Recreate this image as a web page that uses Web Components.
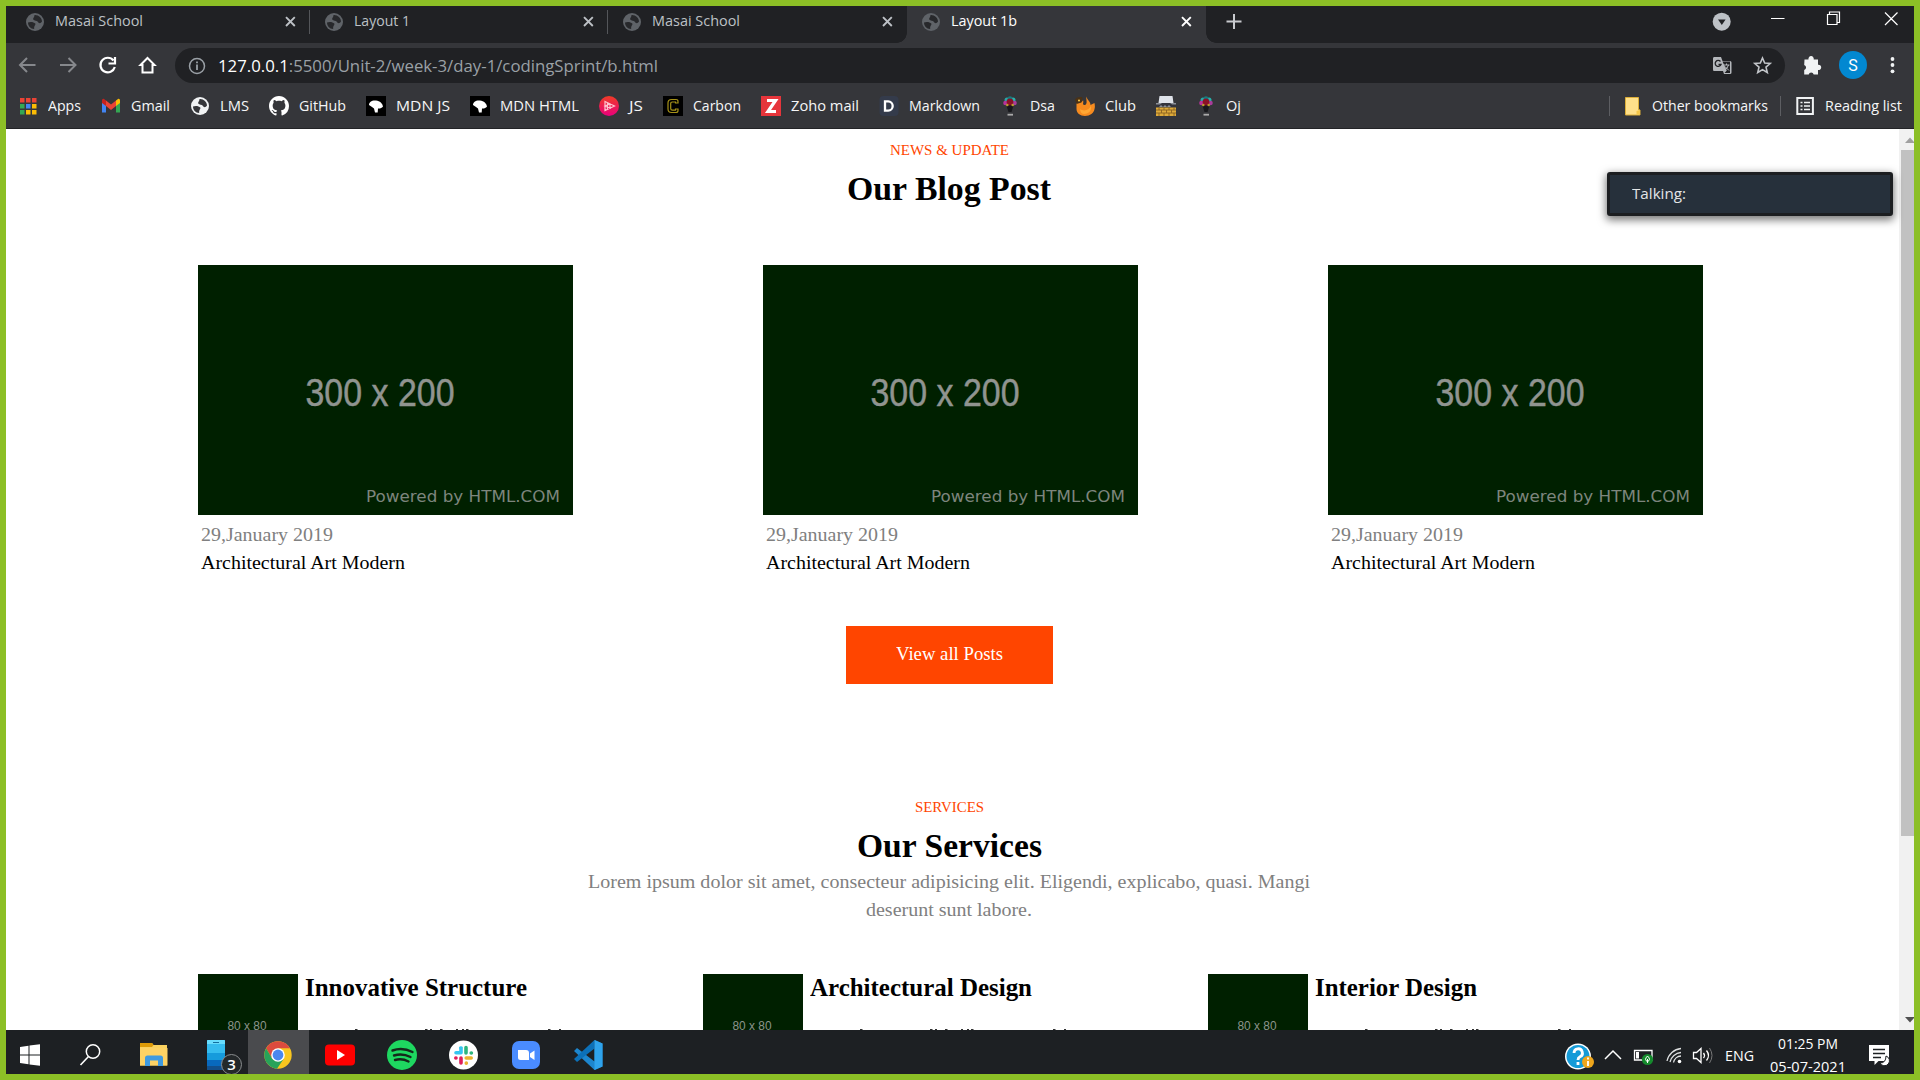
<!DOCTYPE html>
<html lang="en"><head><meta charset="utf-8"><title>Layout 1b</title>
<style>html,body{margin:0;width:1920px;height:1080px;overflow:hidden;background:#8cbf26}</style></head>
<body><desktop-screen></desktop-screen>
<script>
function define(name, css, html, after){
  const t=document.createElement('template');
  t.innerHTML='<style>*,:host{box-sizing:border-box}'+css+'</style>'+html;
  customElements.define(name,class extends HTMLElement{
    connectedCallback(){
      if(this.shadowRoot)return;
      this.attachShadow({mode:'open'}).append(t.content.cloneNode(true));
      if(after)after.call(this,this.shadowRoot);
    }
  });
}
// Text stretched to a fixed width
define('fit-text',':host{display:block;white-space:nowrap;flex:none}span{display:inline-block;transform-origin:0 50%}','<span><slot></slot></span>',function(r){
  const w=+this.getAttribute('w');this.style.width=w+'px';
  const s=r.querySelector('span');
  const n=s.getBoundingClientRect().width;
  if(n)s.style.transform='scaleX('+(w/n)+')';
});
// Icon set; drawn on a square of 20 units
const globe=(a,b)=>`<circle cx="10" cy="10" r="9" fill="${a}"/><path d="M3 10.500C5 9.500 9 9.800 10.300 11.500 11 13 8.800 13.500 9.200 17 5.500 16.800 3 14 3 10.500ZM9.500 3C13.500 2.600 17 6 17 9.500 15.500 12 13.500 11.300 12.800 9.800 12 8.500 9.300 9 8.200 7.600 7.600 6 9.800 5 9.500 3Z" fill="${b}"/>`;
const balloon=`<g transform="translate(3 0)"><path d="M3 8h8L8.500 16h-3z" fill="#17181c"/><circle cx="4" cy="4" r="2.500" fill="#2ba6a6"/><circle cx="10" cy="4" r="2.500" fill="#27b3ad"/><circle cx="2.500" cy="7" r="2.300" fill="#b8339a"/><circle cx="11.500" cy="7" r="2.300" fill="#a93c9b"/><circle cx="7" cy="2.600" r="2.300" fill="#157d80"/><circle cx="7" cy="6" r="3.400" fill="#8a1226"/><circle cx="4.300" cy="9" r="1.300" fill="#bb9b2e"/><circle cx="9.700" cy="9" r="1.300" fill="#bb9b2e"/><rect x="4.500" y="17.800" width="5.500" height="1.800" fill="#aaa"/></g>`;
const mdn=`<path d="M0 0h20v20H0z" fill="#000"/><path d="M3 9C3 6 6 4 10 4.500c4 .5 6.500 3 7 6-1.500 1.800-3 2.200-5 2l-.3 4H9l-1-4-2-1.500z" fill="#fff"/>`;
const ICONS={
 globe:globe('#5f6368','#27282b'),globeLight:globe('#f1f3f4','#35363a'),
 apps:['#ea4335','#ea4335','#ea4335','#34a853','#4285f4','#fbbc05','#34a853','#fbbc05','#fbbc05'].map((c,i)=>`<rect x="${2+i%3*6}" y="${2+(i/3|0)*6}" width="4.500" height="4.500" fill="${c}"/>`).join(''),
 gmail:'<path d="M1 5v11.500h4V9z" fill="#4285f4"/><path d="M19 5v11.500h-4V9z" fill="#34a853"/><path d="M15 4.500 17 3c1-.6 2 .3 2 1.500V7l-4 3z" fill="#fbbc04"/><path d="M5 4.500 10 8.500 15 4.500V10l-5 4-5-4z" fill="#ea4335"/><path d="M5 4.500 3 3C2 2.400 1 3.300 1 4.500V7l4 3z" fill="#c5221f"/>',
 github:'<path fill="#fff" transform="scale(1.25)" d="M8 0C3.580 0 0 3.580 0 8c0 3.540 2.290 6.530 5.470 7.590.4.070.55-.17.55-.38 0-.19-.01-.82-.01-1.490-2.010.37-2.530-.49-2.690-.94-.09-.23-.48-.94-.82-1.130-.28-.15-.68-.52-.01-.53.63-.01 1.080.58 1.230.82.72 1.210 1.870.87 2.330.66.07-.52.28-.87.51-1.070-1.780-.2-3.640-.89-3.640-3.950 0-.87.31-1.590.82-2.150-.08-.2-.36-1.020.08-2.120 0 0 .67-.21 2.200.82.64-.18 1.320-.27 2-.27s1.360.09 2 .27c1.530-1.040 2.200-.82 2.200-.82.44 1.100.16 1.920.08 2.120.51.56.82 1.270.82 2.150 0 3.070-1.870 3.750-3.650 3.950.29.25.54.73.54 1.480 0 1.070-.01 1.930-.01 2.200 0 .21.15.46.55.38A8 8 0 0 0 16 8c0-4.420-3.580-8-8-8"/>',
 mdn:mdn,
 js:'<defs><linearGradient id="a" x1="0" y1="0" x2="0" y2="1"><stop offset="0" stop-color="#f03c26"/><stop offset="1" stop-color="#e8007c"/></linearGradient></defs><circle cx="10" cy="10" r="10" fill="url(#a)"/><path d="M6 5.500 15.500 10 6 14.500zM6 10l5-2v4zM8.500 6.500v7" fill="none" stroke="#ffc3ce" stroke-width="1.200"/>',
 carbon:'<path d="M0 0h20v20H0z" fill="#000"/><path d="M15 7V5.500Q15 3.500 13 3.500H8.500Q5 3.500 5 7v6q0 3.500 3.500 3.500H13q2 0 2-2V13h-2.500v1.200H9.300q-1.600 0-1.600-1.600V7.500Q7.700 6 9.300 6h3.200v1z" fill="none" stroke="#a69219" stroke-width="1.200"/>',
 zoho:'<path d="M0 0h20v20H0z" fill="#e6353b"/><path d="M6 4.500h8.500L7 15.500h8" fill="none" stroke="#fff" stroke-width="3.200"/>',
 md:'<rect x=".5" width="19" height="20" rx="4" fill="#343b4b"/><path d="M6 5.300h3.200a4.500 4.700 0 0 1 0 9.400H6z" fill="none" stroke="#fff" stroke-width="2.300"/>',
 balloon:balloon,
 club:'<path d="M1.500 7C4 7 8 6 8 4c1 3-1 4 1 5 2 .5 3-2 2.500-4.500C11.500 3 11 2 11.500.5c0 3 4 5 4 8.500l4-2c.5 3 .5 4 0 6-.5 4-4.500 7-9.500 7S1.500 17 1.500 13z" fill="#f68b1f"/><path d="M5 13c4 3 9 1 11-3 1 5-3 8-7 8-2 0-4-2-4-5z" fill="#ffa733"/><path d="M0 3.500C2 1 5 .5 7.500 1.500L6.500 6.500 1.500 8z" fill="#4b3216"/><circle cx="4" cy="4.500" r="1" fill="#ffd04d"/>',
 farm:'<path d="M3.500 0h13l1 7H2.500z" fill="#dfe3ea"/><path d="M0 7h20v4H0z" fill="#8c9098"/><path d="M0 8.500h4l2-1.500h8l2 1.500h4V11h-5l-2-2-2 2-2-2-2 2-2-2H5l-2 2H0z" fill="#33343d"/><path d="M0 11.500h20V20H0z" fill="#ddaa3a"/><path d="M0 14h20M0 17h20M3 11.500V14M8 11.500V14M13 11.500V14M18 11.500V14M5.500 14v3M10.500 14v3M15.500 14v3M3 17v3M8 17v3M13 17v3M18 17v3" stroke="#8b6222" fill="none" stroke-width=".9"/>',
 folder:'<path d="M3.500 1.500h13v12l1.500.5V19H3.500z" fill="#ffe08a" stroke="#dcae38" stroke-width="1"/><path d="M14.500 18.500v-3.500l3.300-1v4.500z" fill="#f5c748"/>',
 reading:'<rect x="2.300" y="2" width="15.600" height="16" fill="none" stroke="#f1f3f4" stroke-width="2"/><path d="M5.500 6.500h2M5.500 10h2M5.500 13.500h2M9 6.500h6M9 10h6M9 13.500h6" stroke="#f1f3f4" stroke-width="1.600"/>',
 close:'<path d="M5 5.200l8.800 8.800M13.800 5.200l-8.800 8.800" stroke="currentColor" stroke-width="1.900"/>'
};
customElements.define('ui-icon',class extends HTMLElement{connectedCallback(){
  if(this.shadowRoot)return;
  this.attachShadow({mode:'open'}).innerHTML='<style>:host{display:block;width:20px;height:20px;flex:none}svg{display:block}</style><svg width="100%" height="100%" viewBox="0 0 20 20">'+ICONS[this.getAttribute('name')]+'</svg>';
}});
define('browser-tab',`:host{display:flex;align-items:center;flex:none;width:298.700px;height:31px;padding:0 9px 0 14px;font:14.500px "Open Sans",sans-serif;color:#bdc1c6;position:relative}
:host([active]){background:#35363a;height:37px;padding-bottom:6px;color:#fff}
:host([sep])::after{content:"";position:absolute;right:0;top:4px;width:1px;height:24px;background:#54565a}
:host([active])::before,:host([active])::after{content:"";position:absolute;bottom:0;width:10px;height:10px;background:radial-gradient(circle at 0 0,transparent 9.500px,#35363a 10px)}
:host([active])::before{left:-10px}:host([active])::after{right:-10px;transform:scaleX(-1)}
fit-text{margin-left:10px;margin-right:auto;position:relative;top:-1px}`,
 '<ui-icon name="globe"></ui-icon><fit-text></fit-text><ui-icon name="close"></ui-icon>',function(r){
  const f=r.querySelector('fit-text');f.setAttribute('w',this.getAttribute('w'));f.append(this.getAttribute('label'));f.replaceWith(f.cloneNode(true));
});
define('tab-strip',':host{display:flex;align-items:flex-start;height:37px;padding-left:5px;background:#202124}.r{margin-left:auto}svg{display:block}.p{margin-left:16px}',
`<browser-tab label="Masai School" w="88" sep></browser-tab><browser-tab label="Layout 1" w="56" sep></browser-tab><browser-tab label="Masai School" w="88"></browser-tab><browser-tab label="Layout 1b" w="66" active></browser-tab>
<svg class="p" width="24" height="30" viewBox="1222 6 24 30"><path d="M1226.500 21.500h15M1234 14v15" stroke="#c8cace" stroke-width="2"/></svg>
<svg class="r" width="214" height="30" viewBox="1700 6 214 30"><circle cx="1721.700" cy="21.700" r="9" fill="#bdc1c6"/><path d="M1718 19.500h7.600l-3.800 5.500z" fill="#202124"/><path d="M1771 18.500h13.500M1827.500 14.500h9.500v10h-9.500zM1829.500 14v-2h10v10.500h-2M1885 12.500l12.500 12.500M1897.500 12.500l-12.500 12.500" fill="none" stroke="#fff" stroke-width="1.200"/></svg>`);
define('address-bar',`:host{display:flex;align-items:center;height:45px;background:#35363a}svg{display:block;flex:none}
.o{display:flex;align-items:center;width:1610px;height:35px;border-radius:18px;background:#202124;font:17px "Open Sans",sans-serif;color:#9aa0a6;padding-left:11px}b{font-weight:400;color:#fff}.u{margin-left:9.500px;margin-right:auto}`,
`<svg width="169" height="35" viewBox="6 48 169 35" fill="none" stroke="#86888c" stroke-width="2"><path d="M35.500 65H20M27 58l-7 7 7 7M60 65h15.500M68.500 58l7 7-7 7"/><path d="M113.500 60.500a7.300 7.300 0 1 0 1.300 6.500M115 57v6.500h-6.500" stroke="#fff" stroke-width="2.200"/><path d="M147.500 58l7 7h-2v7.500h-10V65h-2z" stroke="#fff"/></svg>
<div class="o"><svg width="22" height="22" viewBox="0 0 22 22"><circle cx="11" cy="11" r="7.500" fill="none" stroke="#9aa0a6" stroke-width="1.500"/><path d="M11 9.500v5.500M11 6.500v1.700" stroke="#9aa0a6" stroke-width="1.800"/></svg><fit-text class="u" w="440"><b>127.0.0.1</b>:5500/Unit-2/week-3/day-1/codingSprint/b.html</fit-text>
<svg width="85" height="35" viewBox="1700 48 85 35"><path d="M1714 57h7l1.500 4h7.500q1.500 0 1.500 1.500v10q0 1.500-1.500 1.500H1724l-1-3h-9q-1 0-1-1.500V58.500q0-1.500 1-1.500z" fill="#b4b7bb"/><path d="M1722.500 61.500h7.500v11.500h-5.500l2.300-2.500z" fill="#202124"/><path d="M1723.500 65h6M1726.500 63.500V65M1728.500 65q-1 3.500-4 5M1725 66.500l4 4" stroke="#b4b7bb" fill="none"/><path d="M1720.500 61.500a3 3 0 1 0 .5 3h-2.500" stroke="#202124" stroke-width="1.300" fill="none"/><path d="M1762.500 58l2.200 5 5.500.5-4.200 3.600 1.300 5.400-4.800-2.900-4.800 2.900 1.300-5.400-4.200-3.600 5.500-.5z" fill="none" stroke="#c2c5c9" stroke-width="1.600"/></svg></div>
<svg width="129" height="35" viewBox="1785 48 129 35"><path d="M1804.500 59.500h4a2.700 2.700 0 1 1 5.200 0h4.300v5.200a2.700 2.700 0 1 1 0 5.300v4.500h-4.300a2.600 2.600 0 0 0-5 0h-4.500v-4.500a2.600 2.600 0 0 0 0-5z" fill="#f1f3f4"/><circle cx="1853" cy="65" r="14" fill="#0288d1"/><text x="1853" y="70.500" text-anchor="middle" font-family="Roboto" font-size="16" fill="#fff">S</text><g fill="#f1f3f4"><circle cx="1892.500" cy="59" r="1.900"/><circle cx="1892.500" cy="65" r="1.900"/><circle cx="1892.500" cy="71.300" r="1.900"/></g></svg>`);
define('book-mark',':host{display:flex;align-items:center;gap:10px;flex:none}fit-text{position:relative;top:-1px}','',function(r){
  const i=document.createElement('ui-icon');i.setAttribute('name',this.getAttribute('icon'));r.append(i);
  if(this.hasAttribute('w')){const f=document.createElement('fit-text');f.setAttribute('w',this.getAttribute('w'));f.append(this.getAttribute('label'));r.append(f);}
});
define('bookmarks-bar',':host{display:flex;align-items:center;height:41px;padding:0 12.500px 4px 11.500px;gap:20px;background:#35363a;border-bottom:1px solid #232427;font:14.500px "Open Sans",sans-serif;color:#f5f6f7}i{width:1px;height:20px;background:#5d5e62}.r{margin-left:auto;display:flex;gap:12px;align-items:center}.g{margin-left:1.500px}',
[['apps','Apps',33],['gmail','Gmail',39],['globeLight','LMS',29],['github','GitHub',47],['mdn','MDN JS',54],['mdn','MDN HTML',79],['js','JS',14],['carbon','Carbon',48],['zoho','Zoho mail',68],['md','Markdown',71],['balloon','Dsa',25],['club','Club',31],['farm'],['balloon','Oj',15]].map(b=>`<book-mark icon="${b[0]}" ${b[1]?`label="${b[1]}" w="${b[2]}"`:''}></book-mark>`).join('')+
'<div class="r"><i></i><book-mark icon="folder" label="Other bookmarks" w="116"></book-mark><i></i><book-mark class="g" icon="reading" label="Reading list" w="77"></book-mark></div>');
define('section-heading',':host{display:flex;flex-direction:column;align-items:center;flex:none}.k{font-size:15px;line-height:20px;color:#ff4500}.h{font-size:34px;line-height:39px;font-weight:700;margin-top:9px}','',function(r){
  for(const k of ['k','h']){const f=document.createElement('fit-text');f.className=k;f.setAttribute('w',this.getAttribute(k+'w'));f.append(this.getAttribute(k));r.append(f);}
});
define('blog-card',':host{display:block;width:375px}svg{display:block;background:#002000}fit-text{font-size:19px;line-height:28px;margin-left:2.500px}.d{color:#808080;margin-top:6px}',
`<svg width="375" height="250" viewBox="0 0 375 250"><text x="107.500" y="140.600" font-family="Liberation Sans" font-size="39.500" fill="#909490" stroke="#909490" stroke-width=".5" textLength="149" lengthAdjust="spacingAndGlyphs">300 x 200</text><text x="168" y="237" font-family="DejaVu Sans" font-size="15.500" fill="#7d857d" textLength="194" lengthAdjust="spacingAndGlyphs">Powered by HTML.COM</text></svg><fit-text class="d" w="132">29,January 2019</fit-text><fit-text w="204">${'<slot></slot>'}</fit-text>`);
define('service-item',':host{display:flex;width:505px;gap:6.500px}svg{display:block;flex:none}.i{background:#002000}fit-text{font-size:24.500px;line-height:27px;font-weight:700}.t{margin-top:28px}',
`<svg class="i" width="100" height="100" viewBox="0 0 100 100"><text x="29.500" y="56" font-family="Liberation Sans" font-size="13" fill="#8c948c" textLength="39" lengthAdjust="spacingAndGlyphs">80 x 80</text></svg><div></div>`,function(r){
  r.querySelector('div').innerHTML=`<fit-text w="${this.getAttribute('w')}">${this.getAttribute('label')}</fit-text><svg class="t" width="270" height="1"><path d="M50 .5h2.500M120 .5h2.500M125 .5h2M135 .5h2.500M151 .5h2M157 .5h2M161 .5h2.500M243 .5h2.500M254 .5h2" stroke="#333"/></svg>`;
});
define('web-page',`:host{display:flex;height:901px;background:#fff;overflow:hidden;font-family:"Liberation Serif",serif;color:#000}
main{width:1893px;padding-top:11px;flex:none;display:flex;flex-direction:column}
.c{display:flex;flex:none;gap:190px;margin:57px 0 0 192px}
.v{flex:none;width:207px;height:58px;background:#ff4500;color:#fff;font-size:19px;line-height:55px;align-self:center;margin:49px 0 113px -6px;display:flex;justify-content:center}
section-heading{width:1886.500px}
.l{flex:none;width:1886.500px;margin-top:3px;display:flex;flex-direction:column;align-items:center;color:#808080;font-size:19px;line-height:28px}
.s{display:flex;flex:none;margin:50px 0 0 192px;height:100px}
.b{width:15px;background:#f1f1f1;display:flex;flex-direction:column;padding-left:2px}.b div{height:686px;background:#c1c1c1}.b svg{display:block;flex:none}`,
`<main><section-heading k="NEWS &amp; UPDATE" kw="119" h="Our Blog Post" hw="204"></section-heading>
<div class="c"><blog-card>Architectural Art Modern</blog-card><blog-card>Architectural Art Modern</blog-card><blog-card>Architectural Art Modern</blog-card></div>
<div class="v"><fit-text w="107">View all Posts</fit-text></div>
<section-heading k="SERVICES" kw="69" h="Our Services" hw="185"></section-heading>
<div class="l"><fit-text w="722">Lorem ipsum dolor sit amet, consecteur adipisicing elit. Eligendi, explicabo, quasi. Mangi</fit-text><fit-text w="166">deserunt sunt labore.</fit-text></div>
<div class="s"><service-item label="Innovative Structure" w="222"></service-item><service-item label="Architectural Design" w="222"></service-item><service-item label="Interior Design" w="162"></service-item></div></main>
<div class="b"><svg width="13" height="21"><path d="M4 14l5-5.500 5 5.500z" fill="#a0a0a0"/></svg><div></div><svg width="13" height="194" viewBox="0 836 13 194"><path d="M4 1017h10l-5 5.500z" fill="#505050"/></svg></div>`);
const cell=(x,w,s)=>`<svg width="${w}" height="44" viewBox="${x} 1030 ${w} 44">${s}</svg>`;
define('task-bar',`:host{display:flex;height:44px;background:#1d2023;color:#fff;font:15px "Open Sans",sans-serif}svg{display:block;flex:none}.on{background:#4a4b4e;width:61px;margin-left:1px}.r{margin-left:auto;display:flex}.g{margin:12px 16px 0 9px;line-height:26px}.t{display:flex;flex-direction:column;align-items:center;width:76px;line-height:23px;padding-top:2px;margin-right:-1px}`,
cell(6,55,'<path d="M20 1047l8.500-1.200v8.700H20zM29.500 1045.600l10.500-1.400v10.300H29.500zM20 1055.500h8.500v8.700L20 1063zM29.500 1055.500H40v10.300l-10.500-1.400z" fill="#fff"/>')+
cell(61,62,'<circle cx="93" cy="1051.500" r="6.700" fill="none" stroke="#fff" stroke-width="1.500"/><path d="M88.500 1056.500l-8 8.500" stroke="#fff" stroke-width="1.600"/>')+
cell(123,62,'<path d="M140 1043h12l1.500 2H167v20.500h-27z" fill="#fad15e"/><path d="M140 1043h12l1.500 2-1.500 2h-12z" fill="#dd9a07"/><path d="M140 1048h27.500v17.500H140z" fill="#fdd264"/><path d="M145 1066v-8q0-2.500 2.500-2.500h13q2.500 0 2.500 2.500v8h-5v-5.500h-8v5.500z" fill="#3f9adf"/>')+
cell(185,62,'<rect x="207" y="1040" width="18" height="30" rx="1" fill="#35bcef"/><path d="M207 1041q0-1 1-1h16q1 0 1 1v3h-18z" fill="#68dcfd"/><path d="M213 1042.500h6" stroke="#126f9e"/><path d="M207 1053h18v7h-18z" fill="#169bdc"/><path d="M207 1060h18v6h-18z" fill="#0869be"/><path d="M207 1066h18v4h-18z" fill="#124f8c"/><circle cx="231.500" cy="1064.500" r="10" fill="#24282a" stroke="#8a8d8f"/><text x="231.500" y="1070" text-anchor="middle" font-family="Open Sans" font-size="15" font-weight="600" fill="#fff">3</text>')+
'<div class="on">'+cell(248,61,'<circle cx="278" cy="1055" r="13.700" fill="#f9c61f"/><path d="M266.100 1048.200A13.700 13.700 0 0 1 289.900 1048.200H278L272.100 1058.400z" fill="#dc4b3e"/><path d="M266.100 1048.200A13.700 13.700 0 0 0 277 1068.700L283.900 1058.400 278 1060.500 272.100 1058.400z" fill="#27a35a"/><circle cx="278" cy="1055" r="6.800" fill="#fff"/><circle cx="278" cy="1055" r="5.400" fill="#4a87ee"/>')+'</div>'+
cell(309,62,'<rect x="325" y="1044.500" width="30" height="21" rx="4" fill="#f00"/><path d="M337 1050l8 5-8 5z" fill="#fff"/>')+
cell(371,62,'<circle cx="402" cy="1055" r="15" fill="#1ed760"/><path d="M392.500 1050.500q10-3.500 20 1.500M394 1055.500q8.500-2.500 16.500 1.500M395 1060q7-2 13.500 1.500" fill="none" stroke="#15281b" stroke-width="2.400" stroke-linecap="round"/>')+
cell(433,62,'<circle cx="463.500" cy="1055" r="14.500" fill="#fff"/><g stroke-width="3.600" stroke-linecap="round"><path d="M461 1048v4.500M461.200 1048h-.5M456 1052.800h5" stroke="#36c5f0"/><path d="M466 1047.500v5.500M471.200 1053h.2" stroke="#2eb67d"/><path d="M466.200 1058h5M466.300 1063v.2" stroke="#ecb22e"/><path d="M461 1058v5M455.800 1058h.2" stroke="#e01e5a"/></g>')+
cell(495,62,'<rect x="512" y="1041" width="28" height="28" rx="7" fill="#4a8cff"/><path d="M518 1050h8q3 0 3 3v7h-8.500q-2.500 0-2.500-2.500zM530 1053.500l4.500-3v9.500l-4.500-3z" fill="#fff"/>')+
cell(557,62,'<path d="M594.500 1040l8 3.500v23l-8 3.500-20.500-19 3-3 17.500 13.500z" fill="#1d86ce"/><path d="M574 1059l3 3 17.500-13.500V1040l-20.500 19z" fill="#0c70b8"/><path d="M594.500 1040l8 3.500v23l-8 3.500z" fill="#2fa3ec"/>')+
'<div class="r">'+
cell(1562,34,'<circle cx="1578" cy="1056.500" r="13" fill="#fff"/><circle cx="1578" cy="1056.500" r="11.500" fill="#159bd8"/><path d="M1574 1053a4.200 4.200 0 1 1 6 3.800q-2 1-2 3.200M1578 1062v3" fill="none" stroke="#fff" stroke-width="2.800"/><circle cx="1588" cy="1062" r="6" fill="#efa61c"/><path d="M1588 1061v5M1588 1057.500v2" stroke="#fff" stroke-width="1.800"/>')+
cell(1596,32,'<path d="M1605 1059l8-8 8 8" fill="none" stroke="#fff" stroke-width="1.500"/>')+
cell(1628,30,'<path d="M1634.500 1050.500h17.500v9.500h-17.500z" fill="none" stroke="#fff" stroke-width="1.300"/><path d="M1636 1052h3v6.500h-3z" fill="#fff"/><circle cx="1647.500" cy="1059.500" r="5.600" fill="#148a2c"/><path d="M1647.500 1056q4 4 0 5.500-4-1.500 0-5.500zM1647.500 1059v4" stroke="#fff" fill="none"/>')+
cell(1657,28,'<g fill="none" stroke="#dfe1e2" stroke-width="1.300"><path d="M1666 1061a15.500 15.500 0 0 1 14-12.500M1669 1062a12 12 0 0 1 11-9.500M1672.500 1062.500a8 8 0 0 1 7.500-6.500"/></g><circle cx="1678.500" cy="1061.500" r="1.800" fill="#fff"/>')+
cell(1685,30,'<path d="M1692.500 1052.500h3l4.500-4v14l-4.500-4h-3z" fill="none" stroke="#fff" stroke-width="1.300"/><path d="M1702.500 1053q2 2.500 0 5M1705.500 1050.500q4 5 0 10" fill="none" stroke="#fff" stroke-width="1.300"/><path d="M1708.500 1048q5 7.500 0 15" fill="none" stroke="#777"/>')+
'<fit-text class="g" w="29">ENG</fit-text><div class="t"><fit-text w="60">01:25 PM</fit-text><fit-text w="76">05-07-2021</fit-text></div>'+
cell(1845,69,'<path d="M1869 1045h20v16h-10.500l-4 4v-4H1869z" fill="#fff"/><path d="M1873 1049.500h12M1873 1053.500h12M1873 1057.500h8" stroke="#1d2023" stroke-width="1.500"/><path d="M1886 1056a5 5 0 1 1-6 7q6 0 6-7z" fill="#fff" stroke="#1d2023"/>')+'</div>');
define('talking-toast',':host{position:absolute;left:1607px;top:172px;width:286px;height:44px;background:#26303b;border:3px solid #1c1e21;border-radius:3px;box-shadow:0 3px 9px 1px #0008;font:15px "Open Sans",sans-serif;line-height:37px;color:#e3e5e7;padding-left:22px}','<fit-text w="54">Talking:</fit-text>');
define('desktop-screen',':host{display:block;width:1920px;height:1080px;padding:6px;background:#8cbf26;position:relative;overflow:hidden}','<tab-strip></tab-strip><address-bar></address-bar><bookmarks-bar></bookmarks-bar><web-page></web-page><task-bar></task-bar><talking-toast></talking-toast>');
</script></body></html>
